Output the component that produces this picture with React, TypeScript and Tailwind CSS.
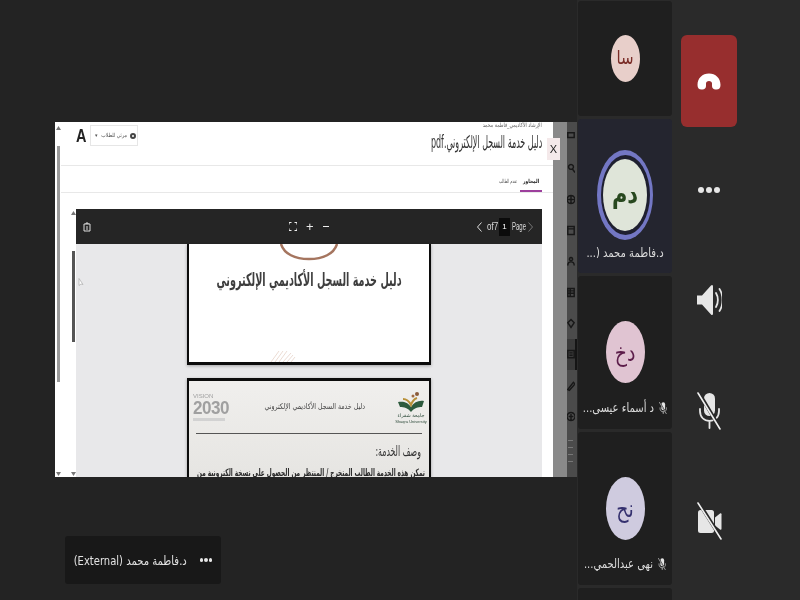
const arabic = "font-['DejaVu_Sans','Noto_Sans',sans-serif]";

function HangUp() {
  return (
    <svg width="24" height="17" viewBox="0 0 24 17" fill="#fff">
      <path d="M.5 12C.5 5 5.500.5 12 .5S23.500 5 23.500 12c0 3-1.500 4.500-4 4.500h-1c-2 0-3.500-1.200-3.500-3.500v-2.500C15 9 13.800 8 12 8s-3 1-3 2.500V13c0 2.300-1.500 3.500-3.500 3.500h-1c-2.500 0-4-1.500-4-4.500z" />
    </svg>
  );
}

function Speaker() {
  return (
    <svg width="26" height="34" viewBox="0 0 26 34" fill="none">
      <path d="M1 12.500h5L15 2.500c1-1 2-.5 2 1v27c0 1.500-1 2-2 1L6 21.500H1z" fill="#e6e6e6" />
      <path d="M20 10c2.500 4 2.500 10 0 14M23.500 6c4 6 4 16 0 22" stroke="#e6e6e6" strokeWidth="1.800" strokeLinecap="round" />
    </svg>
  );
}

function MicOff({ size = 1 }: { size?: number }) {
  return (
    <svg width={24 * size} height={38 * size} viewBox="0 0 24 38" fill="none">
      <rect x="7" y="1" width="11" height="23" rx="5.500" fill="#e6e6e6" />
      <path d="M3 17v2c0 6 4 10 9.500 10S22 25 22 19v-2M12.500 29v7" stroke="#e6e6e6" strokeWidth="1.800" strokeLinecap="round" />
      <path d="M2 1l21 35" stroke="#292929" strokeWidth="3.500" />
      <path d="M1 1l22 36" stroke="#f0f0f0" strokeWidth="1.600" strokeLinecap="round" />
    </svg>
  );
}

function CamOff() {
  return (
    <svg width="25" height="38" viewBox="0 0 25 38" fill="none">
      <rect x="1" y="8" width="16" height="23" rx="2.500" fill="#e6e6e6" />
      <path d="M18 15.500l5-4c.8-.6 1.500-.2 1.500.7v14.600c0 .9-.7 1.300-1.500.7l-5-4z" fill="#e6e6e6" />
      <path d="M2 1l22 35" stroke="#292929" strokeWidth="3.500" />
      <path d="M1 1l23 36" stroke="#f0f0f0" strokeWidth="1.600" strokeLinecap="round" />
    </svg>
  );
}

function ScrollArrow({ down }: { down?: boolean }) {
  return (
    <svg width="5" height="4" viewBox="0 0 5 4" className="shrink-0">
      <path d={down ? "M0 0h5L2.500 4z" : "M2.500 0L5 4H0z"} fill="#777" />
    </svg>
  );
}

function SideIcons() {
  // the blurred strip of the app rail behind the shared window
  const rows = [
    "M1 0h8v6H1z",
    "M5 1a3 3 0 1 0 .01 0M7 7l3 4",
    "M5 1a5 5 0 1 0 .01 0M0 6h10M5 1v10",
    "M1 1h8v10H1zM1 4h8",
    "M5 1a2 2 0 1 0 .01 0M1 11c0-6 8-6 8 0",
    "M1 1h8v10H1zM1 4h8M1 7h8M4 1v10",
    "M5 1l4 4-4 6-4-6z",
    "M1 1h8v9H1zM3 4h4M3 7h4",
    "M1 11l7-9 2 2-7 8z",
    "M5 1a5 5 0 1 0 .01 0M5 3v7M2 6h6",
  ];
  return (
    <div className="flex h-full w-[10px] flex-col bg-[#4b4b4b]">
      {rows.map((d, i) => (
        <div key={i} className={`flex h-[31px] shrink-0 items-center border-r-[2px] ${i === 7 ? "border-[#151515] bg-[#3a3a3a]" : "border-transparent"}`}>
          <svg width="9" height="13" viewBox="0 0 10 12" fill="none">
            <path d={d} stroke="#181818" strokeWidth="1.800" />
          </svg>
        </div>
      ))}
      <div className="ml-[1px] mt-[8px] flex flex-col gap-[6px]">
        <span className="h-px w-[5px] bg-[#777]" />
        <span className="h-px w-[5px] bg-[#777]" />
        <span className="h-px w-[5px] bg-[#777]" />
        <span className="h-px w-[5px] bg-[#777]" />
      </div>
    </div>
  );
}

function Toolbar() {
  return (
    <div className="flex h-[35px] shrink-0 items-center bg-[#252525] text-[#e8e8e8]" dir="ltr">
      <svg width="8" height="10" viewBox="0 0 8 10" fill="none" className="ml-[7px]">
        <path d="M1 2h6v7H1zM3 2V1h2v1M3 5h2M3 7h2" stroke="#ddd" strokeWidth="1" />
      </svg>
      <svg width="8" height="9" viewBox="0 0 8 9" fill="none" className="ml-[198px]">
        <path d="M0 2.500V0.500h2.500M5.500 .5H8v2M0 6.500v2h2.500M5.500 8.500H8v-2" stroke="#eee" strokeWidth="1.200" />
      </svg>
      <span className="ml-[9px] font-['Liberation_Sans',sans-serif] text-[13px] leading-none">+</span>
      <span className="ml-[9px] h-px w-[6px] bg-[#eee]" />
      <div className="ml-auto flex items-center font-['Liberation_Sans',sans-serif] text-[8px] text-[#ddd]">
        <svg width="5" height="10" viewBox="0 0 5 10" fill="none">
          <path d="M4.500.5L.5 5l4 4.500" stroke="#ddd" strokeWidth="1" />
        </svg>
        <span className="ml-[5px] w-[10px] origin-left scale-y-125 whitespace-nowrap">of7</span>
        <span className="ml-[2px] flex h-[18px] w-[11px] items-center justify-center bg-[#0b0b0b] text-[#fff]">1</span>
        <span className="ml-[2px] w-[12px] origin-left scale-x-[0.75] scale-y-125">Page</span>
        <svg width="5" height="10" viewBox="0 0 5 10" fill="none" className="ml-[4px] mr-[9px]">
          <path d="M.5.500L4.500 5l-4 4.500" stroke="#777" strokeWidth="1" />
        </svg>
      </div>
    </div>
  );
}

function FirstPage() {
  return (
    <div className="flex h-[121px] w-[244px] shrink-0 flex-col items-center border-x-[2px] border-b-[3px] border-[#0c0c0c] bg-[#fff] shadow-[0_1px_3px_rgba(0,0,0,0.3)]">
      <svg width="58" height="17" viewBox="0 0 58 17" fill="none" className="shrink-0">
        <path d="M1 0c3 10 14 15 28 15S54 10 57 0" stroke="#a5755f" strokeWidth="2.500" />
      </svg>
      <p dir="rtl" className={`mt-[7px] scale-x-[0.69] scale-y-[1.3] whitespace-nowrap text-[14px] font-bold leading-[22px] text-[#3e3e3e] ${arabic}`}>
        دليل خدمة السجل الأكاديمي الإلكتروني
      </p>
      <svg width="28" height="12" viewBox="0 0 28 12" fill="none" className="ml-[80px] mt-auto shrink-0 self-start">
        <path d="M2 12L10 1M6 12l8-11M10 12l8-11M14 12l8-9M18 12l6-7M22 12l4-5" stroke="#ecdcd4" strokeWidth="1" />
      </svg>
    </div>
  );
}

function SecondPage() {
  return (
    <div className="mt-[13px] w-[244px] shrink-0 border-x-[2px] border-t-[3px] border-[#0c0c0c] bg-gradient-to-b from-[#f0efed] to-[#e6e5e2] px-[4px] shadow-[0_1px_3px_rgba(0,0,0,0.3)]">
      <div className="flex h-[52px] items-center" dir="ltr">
        <div className="flex w-[38px] shrink-0 flex-col text-[#a0a0a0]">
          <span className="font-['Liberation_Sans',sans-serif] text-[6px] leading-[7px]">VISION</span>
          <span className="origin-left scale-x-[0.95] font-['Liberation_Sans',sans-serif] text-[18px] font-bold leading-[17px] tracking-[-0.5px]">2030</span>
          <span className="mt-[1px] h-[3px] w-[32px] bg-[#d2d2d2]" />
        </div>
        <span dir="rtl" className={`ml-[33px] w-[101px] origin-right scale-x-[0.78] whitespace-nowrap text-[8px] text-[#444] ${arabic}`}>
          دليل خدمة السجل الأكاديمي الإلكتروني
        </span>
        <div className="ml-auto flex w-[28px] shrink-0 flex-col items-center">
          <svg width="28" height="22" viewBox="0 0 28 22" fill="none">
            <path d="M1 12c5-1 10 0 13 5 3-5 8-7 13-6l-2 6c-4 0-8 1-11 5-3-4-7-5-11-5z" fill="#2d5a3d" />
            <path d="M6 9c3 0 6 2 8 6 1-3 3-6 6-7" stroke="#b89038" strokeWidth="2" />
            <circle cx="20" cy="4" r="2" fill="#8a5a3a" />
            <circle cx="16" cy="6" r="1.500" fill="#a06a40" />
          </svg>
          <span className={`text-[5px] leading-[7px] text-[#2d4a3a] ${arabic}`}>جامعة شقراء</span>
          <span className="whitespace-nowrap font-['Liberation_Sans',sans-serif] text-[4px] leading-[5px] text-[#2d4a3a]">Shaqra University</span>
        </div>
      </div>
      <div className="mx-[3px] h-px bg-[#555]" />
      <p dir="rtl" className={`mr-[4px] mt-[9px] origin-right scale-x-[0.65] scale-y-[1.2] text-[12px] leading-[17px] text-[#333] ${arabic}`}>وصف الخدمة:</p>
      <p dir="rtl" className={`mt-[6px] origin-right scale-x-[0.68] scale-y-[1.2] whitespace-nowrap text-[8.500px] font-bold leading-[12px] text-[#2b2b2b] ${arabic}`}>
        تمكن هذه الخدمة الطالب المتخرج / المنتظر من الحصول على نسخة الكترونية من
      </p>
    </div>
  );
}

function SharedWindow() {
  return (
    <div className="relative flex h-[355px] w-[522px] overflow-hidden blur-[0.4px]">
      <div className="flex w-[6px] shrink-0 flex-col items-center bg-[#fff] pt-[4px]">
        <ScrollArrow />
        <div className="mt-[16px] h-[236px] w-[3px] bg-[#9a9a9a]" />
        <div className="mt-auto pb-[1px]"><ScrollArrow down /></div>
      </div>
      <div className="flex w-[492px] shrink-0 flex-col bg-[#fff]">
        <div className="flex h-[44px] shrink-0 border-b border-[#e8e8e8] pl-[15px] pr-[11px]">
          <div className="flex h-fit items-center pt-[3px]">
            <span className="w-[12px] origin-left scale-x-[0.85] scale-y-[1.1] font-['Liberation_Sans',sans-serif] text-[17px] font-bold leading-[20px] text-[#222]">A</span>
            <div className="ml-[2px] flex h-[21px] w-[48px] items-center gap-[3px] border border-[#e6e6e6] pl-[4px] text-[#555]">
              <span className="text-[5px]">▾</span>
              <span dir="rtl" className={`w-[26px] origin-right scale-x-[0.85] whitespace-nowrap text-[5.500px] ${arabic}`}>مرئي للطلاب</span>
              <span className="h-[6px] w-[6px] shrink-0 rounded-full border-[2px] border-[#444]" />
            </div>
          </div>
          <div dir="rtl" className="ml-auto flex flex-col items-start">
            <span className={`-mt-[1px] origin-right scale-x-[0.77] whitespace-nowrap text-[6px] leading-[7px] text-[#666] ${arabic}`}>الإرشاد الأكاديمي_فاطمة محمد</span>
            <span className={`mt-[5px] origin-right scale-x-[0.57] scale-y-[1.25] whitespace-nowrap text-[14px] leading-[19px] text-[#333] ${arabic}`}>دليل خدمة السجل الإلكتروني.pdf</span>
          </div>
        </div>
        <div dir="rtl" className="flex h-[27px] shrink-0 gap-[3px] border-b border-[#e8e8e8] pr-[11px]">
          <div className="flex w-[22px] flex-col items-center justify-end">
            <span className={`mb-[5px] scale-x-[0.8] whitespace-nowrap text-[5.500px] font-bold text-[#222] ${arabic}`}>المحاور</span>
            <span className="h-[2px] w-full bg-[#9c3f9c]" />
          </div>
          <span className={`mb-[7px] origin-right scale-x-[0.62] self-end whitespace-nowrap text-[5.500px] text-[#555] ${arabic}`}>تقدم الطالب</span>
        </div>
        <div className="flex min-h-0 flex-1 pl-[10px] pr-[11px] pt-[16px]">
          <div className="flex w-[5px] shrink-0 flex-col items-center pt-[2px]">
            <ScrollArrow />
            <div className="mt-[36px] h-[91px] w-[3px] bg-[#555]" />
            <div className="mt-auto pb-[1px]"><ScrollArrow down /></div>
          </div>
          <div className="flex min-w-0 flex-1 flex-col overflow-hidden">
            <Toolbar />
            <div className="relative flex min-h-0 flex-1 flex-col items-center bg-[#e8e8ea]">
              <FirstPage />
              <SecondPage />
              <svg width="6" height="10" viewBox="0 0 6 10" fill="none" className="absolute left-[2px] top-[34px]">
                <path d="M1 .5v7l2-1.500 2 .5z" stroke="#aaa" strokeWidth=".7" fill="#fff" />
              </svg>
            </div>
          </div>
        </div>
      </div>
      <div className="w-[14px] shrink-0 bg-[#898989]" />
      <SideIcons />
      <div className="absolute left-[492px] top-[16px] flex h-[22px] w-[13px] items-center justify-center bg-[#f4e9ea] font-['Liberation_Sans',sans-serif] text-[11px] text-[#222]">
        X
      </div>
    </div>
  );
}

function Avatar({ text, size, bg, fg }: { text: string; size: string; bg: string; fg: string }) {
  return (
    <div className={`flex items-center justify-center rounded-[50%] ${size} ${bg} ${fg}`}>
      <span dir="rtl" className={`scale-y-[1.25] ${arabic}`}>{text}</span>
    </div>
  );
}

function TileName({ name, muted }: { name: string; muted?: boolean }) {
  return (
    <div className="flex items-center justify-center gap-[5px] text-[#dcdcdc]">
      <span dir="rtl" className={`scale-y-[1.25] whitespace-nowrap text-[10px] leading-[14px] ${arabic}`}>{name}</span>
      {muted && <MicOff size={0.34} />}
    </div>
  );
}

function Tiles() {
  return (
    <div className="ml-[1px] flex h-[600px] w-[94px] shrink-0 flex-col gap-[3px] overflow-hidden pt-[1px]">
      <div className="flex h-[115px] shrink-0 items-center justify-center rounded-[3px] bg-[#1f1f1f]">
        <div className="-mt-[1px]">
          <Avatar text="سا" size="h-[47px] w-[29px] text-[15px]" bg="bg-[#e8cfca]" fg="text-[#7a2c27]" />
        </div>
      </div>
      <div className="flex h-[154px] shrink-0 flex-col items-center rounded-[3px] bg-[#24252f] pt-[31px]">
        <div className="flex h-[90px] w-[56px] items-center justify-center rounded-[50%] bg-[#7377c4]">
          <div className="flex h-[80px] w-[49px] items-center justify-center rounded-[50%] bg-[#1f2030]">
            <Avatar text="دم" size="h-[72px] w-[44px] text-[21px]" bg="bg-[#dfe5d9]" fg="text-[#28481f] font-bold" />
          </div>
        </div>
        <div className="mt-[6px]">
          <TileName name="د.فاطمة محمد (..." />
        </div>
      </div>
      <div className="flex h-[153px] shrink-0 flex-col items-center rounded-[3px] bg-[#1f1f1f] pt-[45px]">
        <Avatar text="دخ" size="h-[62px] w-[39px] text-[19px]" bg="bg-[#e0c4d2]" fg="text-[#5c1d4a]" />
        <div className="mt-[18px]">
          <TileName name="د أسماء عيسى..." muted />
        </div>
      </div>
      <div className="flex h-[153px] shrink-0 flex-col items-center rounded-[3px] bg-[#1f1f1f] pt-[45px]">
        <Avatar text="نح" size="h-[63px] w-[39px] text-[19px]" bg="bg-[#cfcbdf]" fg="text-[#34306e]" />
        <div className="mt-[17px]">
          <TileName name="نهى عبدالحمي..." muted />
        </div>
      </div>
      <div className="h-[40px] shrink-0 rounded-[3px] bg-[#1f1f1f]" />
    </div>
  );
}

function Controls() {
  return (
    <div className="ml-[9px] flex w-[56px] shrink-0 flex-col items-center pt-[35px]">
      <div className="flex h-[92px] w-[56px] items-center justify-center rounded-[6px] bg-[#972e2e]">
        <HangUp />
      </div>
      <div className="mt-[59px] flex h-[8px] items-center gap-[2px]">
        <span className="h-[6px] w-[6px] rounded-full bg-[#e6e6e6]" />
        <span className="h-[6px] w-[6px] rounded-full bg-[#e6e6e6]" />
        <span className="h-[6px] w-[6px] rounded-full bg-[#e6e6e6]" />
      </div>
      <div className="mt-[89px]"><Speaker /></div>
      <div className="mt-[75px]"><MicOff /></div>
      <div className="mt-[72px]"><CamOff /></div>
    </div>
  );
}

export default function App() {
  return (
    <div className="flex h-[600px] w-[800px] overflow-hidden bg-[#2a2a2a]">
      <div className="flex w-[577px] shrink-0 flex-col bg-[#232323] pl-[55px] pt-[122px]">
        <SharedWindow />
        <div className="ml-[10px] mt-[59px] flex h-[48px] w-[156px] items-center justify-center gap-[13px] rounded-[3px] bg-[#181818] text-[#e2e2e2]">
          <span dir="rtl" className={`scale-y-[1.25] whitespace-nowrap text-[10px] ${arabic}`}>
            د.فاطمة محمد (External)
          </span>
          <span className="flex gap-[1px]">
            <span className="h-[3.500px] w-[3.500px] rounded-full bg-[#e6e6e6]" />
            <span className="h-[3.500px] w-[3.500px] rounded-full bg-[#e6e6e6]" />
            <span className="h-[3.500px] w-[3.500px] rounded-full bg-[#e6e6e6]" />
          </span>
        </div>
      </div>
      <Tiles />
      <Controls />
    </div>
  );
}
